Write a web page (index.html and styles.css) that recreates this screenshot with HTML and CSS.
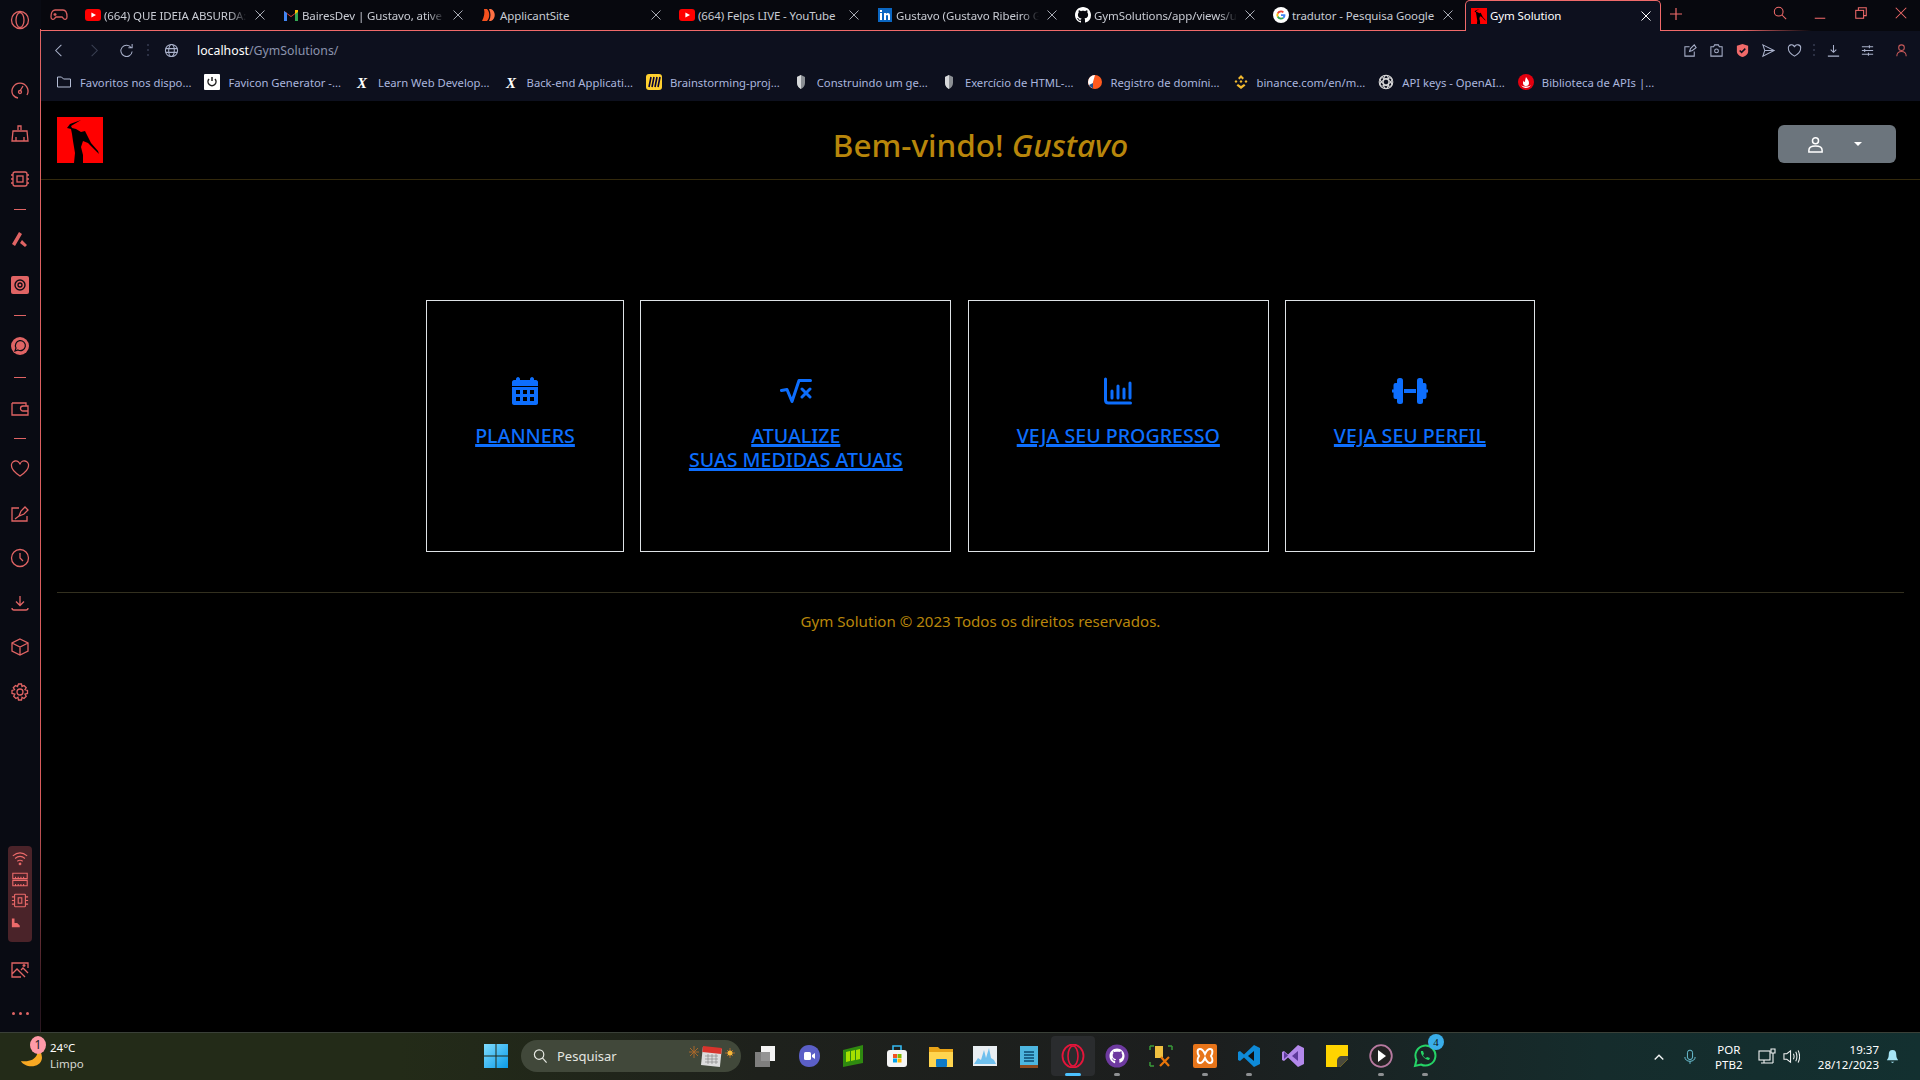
FILE: index.html
```html
<!DOCTYPE html>
<html lang="pt-BR">
<head>
  <meta charset="utf-8">
  <title>Gym Solution</title>
  <link rel="stylesheet" href="styles.css">
</head>
<body>

  <!-- shared favicons -->
  <svg class="defs" width="0" height="0">
    <symbol id="yt" viewBox="0 0 16 16"><rect y="2" width="16" height="12" rx="3" fill="#f00"/><path d="M6.4 5.4v5.2L11 8z" fill="#fff"/></symbol>
    <symbol id="logo" viewBox="0 0 46 46"><rect width="46" height="46" fill="#f00"/><path d="M24 3 13 7l-3 4 4 1 1 5 1 7 1 6 1 6-1 10h9v-8l-2-8 2-6 5 2 9 9 2 2-1-3-7-8-4-8-2-4-4 1-5-3-4-1-1-2z"/></symbol>
    <symbol id="shield" viewBox="0 0 16 16"><path d="M8 1 12 3v6c0 3-2 5-4 6-2-1-4-3-4-6V3z" fill="#8b8f94"/><path d="M8 1v14c-2-1-4-3-4-6V3z" fill="#d6d8da"/></symbol>
    <symbol id="x" viewBox="0 0 16 16"><text x="8" y="14" text-anchor="middle" class="x-mark">X</text></symbol>
  </svg>

  <div class="desktop">
    <div class="app">

      <aside class="sidebar">
        <div class="side-top">
          <svg class="side-ico" viewBox="0 0 20 20"><circle cx="10" cy="10" r="8.5"/><ellipse cx="10" cy="10" rx="4" ry="7.5"/></svg>
        </div>
        <div class="side-slot"><svg class="side-ico" viewBox="0 0 20 20"><path d="M3 15a8 8 0 1 1 14 0"/><path d="M3 15a8 8 0 0 0 5 3M10 11l3-5"/><circle cx="10" cy="12" r="1.5"/></svg></div>
        <div class="side-slot"><svg class="side-ico" viewBox="0 0 20 20"><path d="M8 6V2h3v4M3 7h14l1 10H2zM6 13v4M14 13v4"/></svg></div>
        <div class="side-slot"><svg class="side-ico" viewBox="0 0 20 20"><rect x="3" y="3" width="14" height="14" rx="2"/><rect x="7" y="7" width="6" height="6"/><path d="M1 6h2M1 10h2M1 14h2M17 6h2M17 10h2M17 14h2"/></svg></div>
        <div class="side-sep"></div>
        <div class="side-slot"><svg class="side-ico solid" viewBox="0 0 20 20"><path d="M9 2l3 2-7 12-3-2zM12 10l5 5-2 2-5-4z"/></svg></div>
        <div class="side-slot"><svg class="side-ico solid" viewBox="0 0 20 20"><rect x="1" y="1" width="18" height="18" rx="2"/><circle cx="10" cy="10" r="5" fill="none" stroke="#0a0c14" stroke-width="1.4"/><circle cx="10" cy="10" r="2" fill="none" stroke="#0a0c14"/></svg></div>
        <div class="side-sep"></div>
        <div class="side-slot"><svg class="side-ico solid" viewBox="0 0 20 20"><circle cx="10" cy="10" r="9"/><path d="M5 15l1-3a5 5 0 1 1 2 2z" fill="none" stroke="#0a0c14" stroke-width="1.2"/></svg></div>
        <div class="side-sep"></div>
        <div class="side-slot"><svg class="side-ico" viewBox="0 0 20 20"><path d="M2 5h14v3M2 5v12h16V8h-5a2 2 0 0 0 0 5h5"/></svg></div>
        <div class="side-sep"></div>
        <div class="side-slot"><svg class="side-ico" viewBox="0 0 20 20"><path d="M10 17C4 13 1.500 10 1.500 7A4.200 4.200 0 0 1 10 5.500 4.200 4.200 0 0 1 18.500 7c0 3-2.500 6-8.500 10z"/></svg></div>
        <div class="side-slot"><svg class="side-ico" viewBox="0 0 20 20"><path d="M9 4H2v13h15v-5M9 12l2-5 4-4 3 3-4 4-5 2zM5 15l4-3"/></svg></div>
        <div class="side-slot"><svg class="side-ico" viewBox="0 0 20 20"><circle cx="10" cy="10" r="8.500"/><path d="M10 5v5l3 3"/></svg></div>
        <div class="side-slot"><svg class="side-ico" viewBox="0 0 20 20"><path d="M10 3v9M6 8.500l4 4 4-4M2 15c0 1.500 1 2 2 2h12c1 0 2-.5 2-2"/></svg></div>
        <div class="side-slot"><svg class="side-ico" viewBox="0 0 20 20"><path d="M10 2l8 4v8l-8 4-8-4V6zM2 6l8 4 8-4M10 10v8"/></svg></div>
        <div class="side-slot"><svg class="side-ico" viewBox="0 0 20 20"><circle cx="10" cy="10" r="3"/><path d="M8.500 2h3l.5 2.500 2-1 2.200 2.200-1.200 2 2.500.8v3l-2.500.6 1.200 2.200-2.200 2.200-2-1.200-.5 2.700h-3l-.6-2.700-2 1.200-2.200-2.200 1.200-2.200L2 11.500v-3l2.500-.8-1.200-2 2.200-2.200 2 1z"/></svg></div>

        <div class="side-bottom">
          <div class="side-panel">
            <svg class="panel-ico" viewBox="0 0 20 16"><path d="M2 5c5-4 11-4 16 0M4.500 8c3.500-3 7.500-3 11 0M7 11c2-1.500 4-1.500 6 0M10 13l1 1-1 1-1-1z"/></svg>
            <svg class="panel-ico" viewBox="0 0 20 16"><path d="M2 1h16v6H2zM2 9h16v6H2zM5 5v2M8 5v2M11 5v2M14 5v2M5 13v2M8 13v2M11 13v2M14 13v2"/></svg>
            <svg class="panel-ico" viewBox="0 0 20 16"><rect x="4" y="1" width="12" height="14" rx="1"/><rect x="8" y="5" width="4" height="6"/><path d="M1 4h3M1 8h3M1 12h3M16 4h3M16 8h3M16 12h3"/></svg>
            <svg class="panel-graph" viewBox="0 0 20 16"><path d="M3 4h3v5h3l3 3v2H3z"/></svg>
          </div>
          <div class="side-slot"><svg class="side-ico" viewBox="0 0 20 20"><path d="M18 8V3H2v14h9M2 14l5-5 8 8M11 10l2-2 5 5M14 4v3M12.500 5.500h3"/></svg></div>
          <div class="side-more"><i></i><i></i><i></i></div>
        </div>
      </aside>

      <div class="browser">
        <div class="tabstrip">
          <svg class="game-ico" viewBox="0 0 20 20"><path d="M6 5h8c3 0 4 4 4 7 0 3-3 3-4 1l-1-1H7l-1 1c-1 2-4 2-4-1 0-3 1-7 4-7zM6 8v3M4.500 9.500h3M13 9h.1M15 10h.1"/></svg>

          <div class="tab"><svg class="fav"><use href="#yt"/></svg><span class="tab-title fade">(664) QUE IDEIA ABSURDA:</span><svg class="tab-x" viewBox="0 0 10 10"><path d="M.5.5l9 9M9.500.5l-9 9"/></svg></div>
          <div class="tab">
            <svg class="fav" viewBox="0 0 16 16"><path d="M1 14V4l7 5 7-5v10h-3V7L8 10 4 7v7z" fill="#ea4335"/><path d="M1 14V4l3 2v8z" fill="#4285f4"/><path d="M15 14V4l-3 2v8z" fill="#34a853"/><path d="M12 3h3v2l-3 2z" fill="#fbbc05"/></svg>
            <span class="tab-title fade">BairesDev | Gustavo, ative s</span><svg class="tab-x" viewBox="0 0 10 10"><path d="M.5.5l9 9M9.500.5l-9 9"/></svg>
          </div>
          <div class="tab">
            <svg class="fav" viewBox="0 0 16 16"><path d="M3 2h3c3 3 3 9 0 12H1c2-4 3-8 2-12z" fill="#f4511e"/><path d="M8 2h2c5 2 5 10 0 12H8c2-4 2-8 0-12z" fill="#ff7043"/></svg>
            <span class="tab-title">ApplicantSite</span><svg class="tab-x" viewBox="0 0 10 10"><path d="M.5.5l9 9M9.500.5l-9 9"/></svg>
          </div>
          <div class="tab"><svg class="fav"><use href="#yt"/></svg><span class="tab-title">(664) Felps LIVE - YouTube</span><svg class="tab-x" viewBox="0 0 10 10"><path d="M.5.5l9 9M9.500.5l-9 9"/></svg></div>
          <div class="tab">
            <svg class="fav" viewBox="0 0 16 16"><rect x="1" y="1" width="14" height="14" fill="#0a66c2"/><path d="M3 6h2v7H3zM3 3h2v2H3zM7 6h2v1c1-1.500 4-1.500 4 1.500V13h-2V9c0-1.500-2-1.500-2 0v4H7z" fill="#fff"/></svg>
            <span class="tab-title fade">Gustavo (Gustavo Ribeiro G</span><svg class="tab-x" viewBox="0 0 10 10"><path d="M.5.5l9 9M9.500.5l-9 9"/></svg>
          </div>
          <div class="tab">
            <svg class="fav" viewBox="0 0 16 16"><path fill="#fff" d="M8 0C3.580 0 0 3.580 0 8c0 3.540 2.290 6.530 5.470 7.590.4.070.55-.17.55-.38 0-.19-.01-.82-.01-1.490-2.010.37-2.530-.49-2.690-.94-.09-.23-.48-.94-.82-1.130-.28-.15-.68-.52-.01-.53.63-.01 1.080.58 1.230.82.72 1.210 1.870.87 2.330.66.070-.52.28-.87.51-1.070-1.780-.2-3.640-.89-3.640-3.950 0-.87.31-1.590.82-2.150-.08-.2-.36-1.020.08-2.120 0 0 .67-.21 2.200.82.64-.18 1.320-.27 2-.27.68 0 1.360.09 2 .27 1.530-1.040 2.200-.82 2.200-.82.44 1.100.16 1.920.08 2.120.51.56.82 1.270.82 2.150 0 3.070-1.870 3.750-3.650 3.950.29.25.54.73.54 1.480 0 1.070-.01 1.930-.01 2.200 0 .21.15.46.55.38A8.013 8.013 0 0 0 16 8c0-4.420-3.580-8-8-8z"/></svg>
            <span class="tab-title fade">GymSolutions/app/views/u</span><svg class="tab-x" viewBox="0 0 10 10"><path d="M.5.5l9 9M9.500.5l-9 9"/></svg>
          </div>
          <div class="tab">
            <svg class="fav" viewBox="0 0 16 16"><circle cx="8" cy="8" r="8" fill="#fff"/><path d="M8 3.500a4.500 4.500 0 0 1 3 1.200l-1.300 1.300A2.700 2.700 0 0 0 5.500 7L4 5.800A4.500 4.500 0 0 1 8 3.500z" fill="#ea4335"/><path d="M4 5.800 5.500 7a2.700 2.700 0 0 0 0 2L4 10.200a4.500 4.500 0 0 1 0-4.400z" fill="#fbbc05"/><path d="M4 10.200 5.500 9a2.700 2.700 0 0 0 4 1.300l1.400 1.100A4.500 4.500 0 0 1 4 10.200z" fill="#34a853"/><path d="M12.400 8c0 1.400-.5 2.600-1.500 3.400l-1.400-1.100c.4-.3.7-.7.8-1.300H8V7.200h4.300z" fill="#4285f4"/></svg>
            <span class="tab-title">tradutor - Pesquisa Google</span><svg class="tab-x" viewBox="0 0 10 10"><path d="M.5.5l9 9M9.500.5l-9 9"/></svg>
          </div>
          <div class="tab active"><svg class="fav"><use href="#logo"/></svg><span class="tab-title">Gym Solution</span><svg class="tab-x" viewBox="0 0 10 10"><path d="M.5.5l9 9M9.500.5l-9 9"/></svg></div>

          <svg class="tab-plus" viewBox="0 0 12 12"><path d="M6 0v12M0 6h12"/></svg>

          <div class="win-ctrls">
            <svg class="win-ico" viewBox="0 0 16 16"><circle cx="6.500" cy="6.500" r="5"/><path d="M10 10l5 5"/></svg>
            <svg class="win-ico" viewBox="0 0 16 16"><path d="M2 14h12"/></svg>
            <svg class="win-ico" viewBox="0 0 16 16"><rect x="2" y="5" width="9" height="9"/><path d="M5 5V2h9v9h-3"/></svg>
            <svg class="win-ico" viewBox="0 0 16 16"><path d="M2 2l12 12M14 2 2 14"/></svg>
          </div>
        </div>

        <div class="toolbar">
          <div class="nav-btns">
            <svg class="tool-ico" viewBox="0 0 16 16"><path d="M10 2 4 8l6 6"/></svg>
            <svg class="tool-ico off" viewBox="0 0 16 16"><path d="M6 2l6 6-6 6"/></svg>
            <svg class="tool-ico" viewBox="0 0 16 16"><path d="M13 5a6 6 0 1 0 1 4M14 1v4h-4"/></svg>
          </div>
          <span class="tool-dots left"></span>
          <svg class="tool-ico" viewBox="0 0 16 16"><circle cx="8" cy="8" r="6.500"/><ellipse cx="8" cy="8" rx="3" ry="6.500"/><path d="M2 6h12M2 10h12"/></svg>
          <span class="url"><b>localhost</b>/GymSolutions/</span>
          <div class="tool-right">
            <svg class="tool-ico" viewBox="0 0 16 16"><path d="M7 4H2v10h10V9M7 9l1-3 4-4 2 3-4 3z"/></svg>
            <svg class="tool-ico" viewBox="0 0 16 16"><path d="M2 4h3l1-2h4l1 2h3v10H2z"/><circle cx="8" cy="8.500" r="2"/></svg>
            <svg class="tool-ico badge" viewBox="0 0 16 16"><path d="M8 1l6 2v6c0 3-3 5-6 6-3-1-6-3-6-6V3z"/><path class="tick" d="M5 8l2 2 4-4"/></svg>
            <svg class="tool-ico" viewBox="0 0 16 16"><path d="M2 2l12 6-12 6 2-6zM4 8h10"/></svg>
            <svg class="tool-ico" viewBox="0 0 16 16"><path d="M8 14C3 11 1.500 8 1.500 6A3.300 3.300 0 0 1 8 4.500 3.300 3.300 0 0 1 14.500 6c0 2-1.500 5-6.500 8z"/></svg>
            <span class="tool-dots"></span>
            <svg class="tool-ico" viewBox="0 0 16 16"><path d="M8 2v8M5 7l3 3 3-3M2 14h12"/></svg>
            <svg class="tool-ico" viewBox="0 0 16 16"><path d="M2 4h12M2 8h12M2 12h12M10 2.500v3M5 6.500v3M9 10.500v3"/></svg>
            <svg class="tool-ico user" viewBox="0 0 16 16"><circle cx="8" cy="5" r="3"/><path d="M3 14c0-3 2-5 5-5s5 2 5 5"/></svg>
          </div>
        </div>

        <div class="bookmarks">
          <div class="bm"><svg class="bm-ico folder" viewBox="0 0 16 16"><path d="M1.500 3h4l2 2h7v8h-13z"/></svg><span>Favoritos nos dispo...</span></div>
          <div class="bm"><svg class="bm-ico" viewBox="0 0 16 16"><rect width="16" height="16" rx="1" fill="#fff"/><path d="M5 5a4 4 0 1 0 6 0M8 3v4" fill="none" stroke="#222" stroke-width="1.500"/></svg><span>Favicon Generator -...</span></div>
          <div class="bm"><svg class="bm-ico"><use href="#x"/></svg><span>Learn Web Develop...</span></div>
          <div class="bm"><svg class="bm-ico"><use href="#x"/></svg><span>Back-end Applicati...</span></div>
          <div class="bm"><svg class="bm-ico" viewBox="0 0 16 16"><rect width="16" height="16" rx="3" fill="#ffd02f"/><path d="M5 3 3 13M8 3 6 13M11 3 9 13M14 3l-2 10" stroke="#050038" stroke-width="1.600"/></svg><span>Brainstorming-proj...</span></div>
          <div class="bm"><svg class="bm-ico"><use href="#shield"/></svg><span>Construindo um ge...</span></div>
          <div class="bm"><svg class="bm-ico"><use href="#shield"/></svg><span>Exercício de HTML-...</span></div>
          <div class="bm"><svg class="bm-ico" viewBox="0 0 16 16"><circle cx="8" cy="8" r="7" fill="#ff5a1f"/><path d="M8 1a7 7 0 0 0-7 7c0 3 2 5 4 6l1-6z" fill="#fff"/><path d="M2 11c1 2 3 3 4 3l0-5z" fill="#1c4f8c"/></svg><span>Registro de domíni...</span></div>
          <div class="bm"><svg class="bm-ico" viewBox="0 0 16 16"><path d="M8 1l3 3-1.500 1.500L8 4 6.500 5.500 5 4zM3 6l1.500 1.500L3 9 1.500 7.500zM13 6l1.500 1.500L13 9l-1.500-1.500zM8 6l1.500 1.500L8 9 6.500 7.500zM5 10l3 2 3-2 1.500 1.500L8 15l-4.500-3.500z" fill="#f3ba2f"/></svg><span>binance.com/en/m...</span></div>
          <div class="bm"><svg class="bm-ico" viewBox="0 0 16 16"><g fill="none" stroke="#d8d8d8" stroke-width="1.100"><circle cx="8" cy="8" r="6.800"/><ellipse cx="8" cy="8" rx="6.500" ry="2.800" transform="rotate(30 8 8)"/><ellipse cx="8" cy="8" rx="6.500" ry="2.800" transform="rotate(-30 8 8)"/><ellipse cx="8" cy="8" rx="2.800" ry="6.500"/></g></svg><span>API keys - OpenAI...</span></div>
          <div class="bm"><svg class="bm-ico" viewBox="0 0 16 16"><circle cx="8" cy="8" r="8" fill="#e3000f"/><path d="M8 3c1 2 3 3 3 6a3 3 0 0 1-6 0c0-1 .5-2 1-2.500 0 1 .5 1.500 1 1.500 0-2 .5-3 1-5zM3 11c1 2 3 3 5 3s4-1 5-3c-1 1-3 1.500-5 1.500S4 12 3 11z" fill="#fff"/></svg><span>Biblioteca de APIs |...</span></div>
        </div>

        <main class="page">
          <header class="page-head">
            <div class="brand"><svg class="brand-logo"><use href="#logo"/></svg></div>
            <h1 class="welcome">Bem-vindo! <em>Gustavo</em></h1>
            <div class="user-menu">
              <button class="user-btn">
                <svg class="user-ico" viewBox="0 0 18 18"><circle cx="9" cy="5" r="3.200" fill="none" stroke="#fff" stroke-width="1.600"/><path d="M2 17v-2c0-3 3-4.500 7-4.500s7 1.500 7 4.500v2z" fill="none" stroke="#fff" stroke-width="1.600"/></svg>
                <span class="caret"></span>
              </button>
            </div>
          </header>

          <section class="cards">
            <a class="card" href="#">
              <svg class="card-ico" width="26" height="28" viewBox="0 0 26 28"><path d="M6 0c1 0 2 1 2 2v1h10V2c0-1 1-2 2-2s2 1 2 2v1h2c1 0 2 1 2 2v4H0V5c0-1 1-2 2-2h2V2c0-1 1-2 2-2z"/><path fill-rule="evenodd" d="M0 10h26v16c0 1-1 2-2 2H2c-1 0-2-1-2-2zM4 13v4h4v-4zM11 13v4h4v-4zM18 13v4h4v-4zM4 20v4h4v-4zM11 20v4h4v-4zM18 20v4h4v-4z"/></svg>
              <span class="card-text">PLANNERS</span>
            </a>
            <a class="card" href="#">
              <svg class="card-ico" width="32" height="28" viewBox="0 0 32 28"><path class="line" d="M1.500 13.500 7 12.500l5 12 7-21h11.500"/><path class="line" d="M22 12l8 8M30 12l-8 8"/></svg>
              <span class="card-text">ATUALIZE<br>SUAS MEDIDAS ATUAIS</span>
            </a>
            <a class="card" href="#">
              <svg class="card-ico" width="28" height="28" viewBox="0 0 28 28"><path class="line" d="M1.500 2v21c0 2 1 3 3 3h22"/><path class="line" d="M8 14v7M14 9v12M20 12v9M26 6v15" /></svg>
              <span class="card-text">VEJA SEU PROGRESSO</span>
            </a>
            <a class="card" href="#">
              <svg class="card-ico" width="36" height="28" viewBox="0 0 36 28"><rect x="5" y="1" width="6" height="26" rx="2.500"/><rect x="25" y="1" width="6" height="26" rx="2.500"/><rect x="1.500" y="6" width="5" height="16" rx="2"/><rect x="29.500" y="6" width="5" height="16" rx="2"/><rect x="0" y="12.500" width="2" height="3"/><rect x="34" y="12.500" width="2" height="3"/><rect x="12" y="12" width="12" height="4"/></svg>
              <span class="card-text">VEJA SEU PERFIL</span>
            </a>
          </section>

          <footer class="page-foot">Gym Solution © 2023 Todos os direitos reservados.</footer>
        </main>
      </div>
    </div>

    <div class="taskbar">
      <div class="weather">
        <svg class="moon" viewBox="0 0 24 24"><path d="M16 1c4 6 1 17-15 15 3 7 20 8 21-3 0-5-3-10-6-12z" fill="#f7a823"/></svg>
        <span class="weather-badge">1</span>
        <div class="weather-text"><span>24°C</span><span>Limpo</span></div>
      </div>

      <div class="task-center">
        <svg class="win-logo" viewBox="0 0 24 24"><defs><linearGradient id="wg" x1="0" y1="0" x2="1" y2="1"><stop offset="0" stop-color="#7fdcff"/><stop offset="1" stop-color="#0a9be8"/></linearGradient></defs><path d="M0 0h11.500v11.500H0zM12.500 0H24v11.500H12.500zM0 12.500h11.500V24H0zM12.500 12.500H24V24H12.500z" fill="url(#wg)"/></svg>
        <div class="search">
          <svg class="search-ico" viewBox="0 0 16 16"><circle cx="6.500" cy="6.500" r="5"/><path d="M10 10l4.500 5"/></svg>
          <span>Pesquisar</span>
          <svg class="doodle" viewBox="0 0 46 24"><path d="M5 2v12M0 8h10M1 4l8 8M9 4l-8 8" stroke="#a8672a"/><rect x="13" y="4" width="19" height="18" fill="#ddd" transform="rotate(6 22 12)"/><rect x="13" y="3" width="19" height="6" fill="#d8342c" transform="rotate(6 22 12)"/><path d="M16 12h13M16 15h13M16 18h13M19 10v10M23 10v10M27 10v10" stroke="#888" stroke-width=".7"/><path d="M41 4v10M36 9h10M38 6l6 6M44 6l-6 6" stroke="#a8672a"/><circle cx="41" cy="9" r="2.500" fill="#f5b73a"/></svg>
        </div>
        <div class="task-apps">
          <div class="app-slot"><svg class="app-ico" viewBox="0 0 24 24"><rect x="8" y="2" width="14" height="15" fill="#f4f4f4"/><rect x="2" y="8" width="15" height="15" fill="#8a8a8a" opacity=".9"/></svg></div>
          <div class="app-slot"><svg class="app-ico" viewBox="0 0 24 24"><path d="M12 1c7 0 11 5 11 11s-4 11-11 11c-6 0-10-4-10-11S6 1 12 1z" fill="#5b5fc7"/><rect x="7" y="8" width="7" height="8" rx="1.500" fill="#fff"/><path d="M15 11l3-2v6l-3-2z" fill="#fff"/></svg></div>
          <div class="app-slot"><svg class="app-ico" viewBox="0 0 24 24"><path d="M2 6l20-5v18L2 23z" fill="#2f8a10"/><path d="M5 8l4-1v10l-4 1zM10 7l4-1v10l-4 1zM15 6l4-1v10l-4 1z" fill="#a4e000"/></svg></div>
          <div class="app-slot"><svg class="app-ico" viewBox="0 0 24 24"><path d="M8 6V2h8v4" fill="none" stroke="#35b8f0" stroke-width="1.600"/><rect x="2" y="6" width="20" height="17" rx="3" fill="#f5f5f5"/><path d="M8 10h4v4H8z" fill="#f25022"/><path d="M12.500 10h4v4h-4z" fill="#7fba00"/><path d="M8 14.500h4v4H8z" fill="#00a4ef"/><path d="M12.500 14.500h4v4h-4z" fill="#ffb900"/></svg></div>
          <div class="app-slot"><svg class="app-ico" viewBox="0 0 24 24"><path d="M0 3h9l2 2h13v18H0z" fill="#e8a317"/><path d="M0 8h24v15H0z" fill="#ffd54f"/><rect x="7" y="15" width="11" height="8" rx="1" fill="#0f7ac6"/></svg></div>
          <div class="app-slot"><svg class="app-ico" viewBox="0 0 24 24"><rect y="2" width="24" height="20" fill="#e9eef2"/><path d="M1 20l4-6 3 2 3-10 2 8 3-10 2 10 3 2 2 4z" fill="#6fc0ee"/></svg></div>
          <div class="app-slot"><svg class="app-ico" viewBox="0 0 24 24"><rect x="3" y="2" width="18" height="22" fill="#4db6e0"/><rect x="3" y="21" width="18" height="3" fill="#8d4a1f"/><path d="M7 8h10M7 11h10M7 14h10M7 17h10" stroke="#0b4a70" stroke-width="1.300"/></svg></div>
          <div class="app-slot current"><svg class="app-ico" viewBox="0 0 24 24"><ellipse cx="12" cy="12" rx="10.500" ry="11.500" fill="none" stroke="#e5153b" stroke-width="1.800"/><ellipse cx="12" cy="12" rx="5" ry="10" fill="none" stroke="#e5153b" stroke-width="1.600"/></svg><i class="running wide"></i></div>
          <div class="app-slot"><svg class="app-ico" viewBox="0 0 24 24"><circle cx="12" cy="12" r="11.500" fill="#6e3aa0"/><path transform="translate(4.500 4.500) scale(.94)" fill="#fff" d="M8 0C3.580 0 0 3.580 0 8c0 3.540 2.290 6.530 5.470 7.590.4.070.55-.17.55-.38l0-2.200c-2 .4-2.500-.9-2.700-1.400-.5-.9-1.200-1.300-.8-1.300 1 0 1.500 1 1.700 1.300.7 1 1.900.8 2.300.6.100-.5.300-.9.500-1.100-1.800-.2-3.600-.9-3.600-4 0-.9.300-1.600.8-2.100-.1-.2-.4-1 .1-2.100 0 0 .7-.2 2.200.8 1.300-.4 2.700-.4 4 0 1.500-1 2.200-.8 2.200-.8.500 1.100.2 1.900.1 2.100.5.500.8 1.300.8 2.100 0 3.100-1.900 3.800-3.600 4 .3.200.5.700.5 1.500v2.200c0 .2.200.5.600.4A8 8 0 0 0 16 8c0-4.400-3.600-8-8-8z"/></svg><i class="running"></i></div>
          <div class="app-slot"><svg class="app-ico" viewBox="0 0 24 24"><path d="M6 2h8v12H6z" fill="#f0c040"/><path d="M1 2h4M1 2v4M23 2h-4M23 2v4M1 22h4M1 22v-4" stroke="#3a9a3a" stroke-width="1.500"/><path d="M11 22l9-9M12 13l8 9" stroke="#e8750a" stroke-width="2.200"/></svg></div>
          <div class="app-slot"><svg class="app-ico" viewBox="0 0 24 24"><rect width="24" height="24" rx="2" fill="#e8751a"/><path d="M7 5c3 0 4 3 5 5 1-2 2-5 5-5 3 0 3 4 1 7 2 3 2 7-1 7-3 0-4-3-5-5-1 2-2 5-5 5-3 0-3-4-1-7-2-3-2-7 1-7z" fill="none" stroke="#fff" stroke-width="2"/></svg><i class="running"></i></div>
          <div class="app-slot"><svg class="app-ico" viewBox="0 0 24 24"><path d="M17 1l6 3v16l-6 3L7 13.500 3 17l-2-1V8l2-1 4 3.500z" fill="#0e8ad8"/><path d="M17 7l-6 5 6 5z" fill="#111"/></svg><i class="running"></i></div>
          <div class="app-slot"><svg class="app-ico" viewBox="0 0 24 24"><path d="M17 1l6 3v16l-6 3L7 13.500 3 17l-2-1V8l2-1 4 3.500z" fill="#b388eb"/><path d="M3 8l4 3.500L3 15z" fill="#5e3a9c"/><path d="M17 7l-6 5 6 5z" fill="#5e3a9c"/></svg></div>
          <div class="app-slot"><svg class="app-ico" viewBox="0 0 24 24"><path d="M1 1h22v14l-8 8H1z" fill="#ffd400"/><path d="M23 12v3l-8 8h-3v-6c0-3 2-5 5-5z" fill="#4a4a3c"/></svg></div>
          <div class="app-slot"><svg class="app-ico" viewBox="0 0 24 24"><circle cx="12" cy="12" r="10.800" fill="#222" stroke="#b77aa0" stroke-width="1.800"/><path d="M9 6l8 6-8 6z" fill="#fff"/></svg><i class="running"></i></div>
          <div class="app-slot"><svg class="app-ico" viewBox="0 0 24 24"><path d="M2 22l1.500-6A10 10 0 1 1 8 20.500z" fill="none" stroke="#25d366" stroke-width="2"/><path d="M8 7c-1 3 4 9 8 9l1-2-3-1-1 1c-1 0-3-2-3-3l1-1-1-3z" fill="#25d366"/></svg><span class="app-badge">4</span><i class="running"></i></div>
        </div>
      </div>

      <div class="tray">
        <svg class="tray-ico chev" viewBox="0 0 14 14"><path d="M2 10l5-5 5 5"/></svg>
        <svg class="tray-ico mic" viewBox="0 0 14 18"><rect x="4" y="1" width="6" height="11" rx="3"/><path d="M1 9c0 3 2.500 5 6 5s6-2 6-5M7 14v3"/></svg>
        <div class="tray-lang"><span>POR</span><span>PTB2</span></div>
        <svg class="tray-ico net" viewBox="0 0 18 18"><rect x="1" y="3" width="11" height="9"/><path d="M6 12v3M3 15h12M15 5v10M13 1h4v4h-4z"/></svg>
        <svg class="tray-ico vol" viewBox="0 0 18 18"><path d="M1 6h3l4-3v12l-4-3H1zM11 6c1 2 1 4 0 6M13.500 4c1.500 3 1.500 7 0 10M16 2.500c2 4 2 9 0 13"/></svg>
        <div class="tray-clock"><span>19:37</span><span>28/12/2023</span></div>
        <svg class="bell" viewBox="0 0 16 16"><path d="M8 1c3 0 4 2 4 5s1 4 2 6H2c1-2 2-3 2-6s1-5 4-5zM6 13.500h4L8 15z"/></svg>
      </div>
    </div>
  </div>

</body>
</html>
```

FILE: styles.css
```css
* { box-sizing: border-box; }
html, body { margin: 0; height: 100%; background: #000; overflow: hidden; }
body { font-family: "Noto Sans", "Open Sans", sans-serif; }
.defs { position: absolute; }
.x-mark { font: italic bold 15px "Liberation Serif", serif; fill: #fff; }

.desktop { display: flex; flex-direction: column; height: 1080px; }
.app { display: flex; flex: 1; min-height: 0; }

/* left rail */
.sidebar { display: flex; flex-direction: column; align-items: center; width: 41px; flex: none; background: #090b13; border-right: 1px solid; border-image: linear-gradient(to bottom, transparent 30px, #e06464 30px, #d85c5c 800px, #2b1720 1000px) 1; }
.side-top { height: 67.5px; padding-top: 10px; flex: none; }
.side-slot { display: flex; align-items: center; justify-content: center; height: 44.5px; flex: none; }
.side-ico { width: 20px; height: 20px; fill: none; stroke: #e06464; stroke-width: 1.3; }
.side-ico.solid { fill: #e06464; stroke: none; }
.side-sep { width: 12px; height: 1px; margin: 8px 0; background: #e06464; flex: none; }
.side-bottom { display: flex; flex-direction: column; align-items: center; margin-top: auto; }
.side-panel { display: flex; flex-direction: column; align-items: center; gap: 6px; width: 24px; height: 96px; margin-bottom: 6px; padding-top: 5px; border-radius: 4px; background: #4a2329; }
.panel-ico { width: 18px; height: 15px; fill: none; stroke: #ec6a6a; stroke-width: 1.2; }
.panel-graph { width: 18px; height: 14px; margin-top: 1px; fill: #ec6a6a; margin-right: 4px; }
.side-more { display: flex; gap: 4px; height: 40px; padding-top: 20px; }
.side-more i { width: 3px; height: 3px; border-radius: 50%; background: #e06464; }

/* browser chrome */
.browser { display: flex; flex-direction: column; flex: 1; min-width: 0; }
.tabstrip { display: flex; height: 31px; flex: none; padding-left: 8px; gap: 2px; background: #07080e; border-bottom: 1px solid; border-image: linear-gradient(to right, #f06a6a 1650px, #f06a6a 1700px, transparent 1770px) 1; }
.game-ico { width: 20px; height: 20px; margin: 5px 8px 0 0; fill: none; stroke: #d65f5f; stroke-width: 1.3; flex: none; }
.tab { display: flex; align-items: center; width: 196px; height: 30px; flex: none; padding: 0 8px 0 6px; font-size: 11.5px; letter-spacing: -.1px; color: #c8cbd3; }
.tab.active { height: 31px; margin-bottom: -1px; padding-left: 5px; padding-right: 7px; padding-bottom: 1px; color: #fff; background: #0d101e; border: 1px solid #f06a6a; border-bottom: 0; border-radius: 5px 5px 0 0; }
.fav { width: 16px; height: 16px; margin-right: 3px; flex: none; }
.tab-title { flex: 1; min-width: 0; white-space: nowrap; }
.tab-title.fade { overflow: hidden; mask-image: linear-gradient(to right, #000 88%, transparent 100%); }
.tab-x { width: 10px; height: 10px; margin: 0 2px 0 8px; fill: none; stroke: #a8abb4; stroke-width: 1; flex: none; }
.tab.active .tab-x { stroke: #fff; }
.tab-plus { width: 12px; height: 12px; margin: 8px 0 0 7px; fill: none; stroke: #f06a6a; stroke-width: 1.2; flex: none; }
.win-ctrls { display: flex; justify-content: space-between; align-items: center; margin-left: auto; width: 147px; padding: 0 12px 5px 0; }
.win-ico { width: 14px; height: 14px; fill: none; stroke: #f06a6a; stroke-width: 1.2; }

.toolbar { display: flex; align-items: center; height: 38px; flex: none; padding-left: 11px; background: #0d101e; }
.nav-btns { display: flex; gap: 18.5px; }
.tool-ico { width: 15px; height: 15px; fill: none; stroke: #aab2cc; stroke-width: 1.1; flex: none; }
.tool-ico.off { stroke: #3b4054; }
.tool-ico.badge { fill: #f06a6a; stroke: none; }
.tool-ico .tick { fill: none; stroke: #0d101e; stroke-width: 1.6; }
.tool-ico.user { stroke: #c95a5a; }
.tool-dots { width: 2px; height: 12px; background: repeating-linear-gradient(to bottom, #2b3044 0 2px, transparent 2px 5px); flex: none; }
.tool-dots.left { margin: 0 15px 0 13px; }
.url { margin-left: 18px; font-size: 12.3px; color: #8b93ad; }
.url b { font-weight: 400; color: #fff; }
.tool-right { display: flex; align-items: center; gap: 11px; margin-left: auto; padding-right: 11px; }
.tool-right .tool-ico:nth-last-child(2) { margin: 0 8px 0 8px; }

.bookmarks { display: flex; align-items: center; gap: 13px; height: 32px; flex: none; padding: 0 0 6px 15px; font-size: 11.25px; color: #aab6de; background: #0d101e; }
.bm { display: flex; align-items: center; gap: 8px; white-space: nowrap; }
.bm-ico { width: 16px; height: 16px; flex: none; }
.bm-ico.folder { fill: none; stroke: #b4bcd4; stroke-width: 1; }

/* the page itself */
.page { flex: 1; background: #000; min-height: 0; }
.page-head { display: grid; grid-template-columns: 1fr auto 1fr; align-items: center; height: 79px; padding: 16px; border-bottom: 1px solid #33290c; }
.brand-logo { display: block; width: 46px; height: 46px; }
.welcome { margin: 9px 0 0; font-size: 31.5px; font-weight: 500; line-height: 1.2; color: #b8860b; }
.welcome em { font-style: italic; }
.user-menu { display: flex; justify-content: flex-end; padding: 8px 8px 0 0; }
.user-btn { display: flex; align-items: center; gap: 30px; width: 118px; height: 38px; padding: 0 0 0 29px; background: #6c757d; border: 0; border-radius: 6px; }
.user-ico { width: 17px; height: 17px; }
.caret { width: 0; height: 0; border: 4px solid transparent; border-top-color: #fff; border-bottom: 0; }

.cards { display: flex; justify-content: center; gap: 16.5px; margin-top: 120px; }
.card { display: flex; flex-direction: column; align-items: center; padding: 76px 47.75px 79px; border: 1px solid #dee2e6; color: #0d6efd; }
.card-ico { display: block; margin-bottom: 19px; fill: #0d6efd; }
.card-ico .line { fill: none; stroke: #0d6efd; stroke-width: 3; stroke-linecap: round; stroke-linejoin: round; }
.card-text { font-size: 19.6px; font-weight: 500; line-height: 24px; text-align: center; text-decoration: underline; text-decoration-thickness: 1.5px; text-underline-offset: 2px; }
.page-foot { margin: 40px 16px 0; padding-top: 16px; font-size: 15.1px; line-height: 24px; text-align: center; color: #b8860b; border-top: 1px solid #33301f; }

/* windows taskbar */
.taskbar { position: relative; display: flex; align-items: center; height: 48px; flex: none; padding-bottom: 1px; color: #fff; background: linear-gradient(to right, #232b18 0, #232b18 400px, #1e211c 760px, #1c1e1e 1200px, #152c2c 1600px, #133030 100%); border-top: 1px solid #3a4038; }
.weather { position: relative; display: flex; align-items: center; width: 476px; padding-left: 20px; flex: none; }
.moon { width: 24px; height: 24px; margin-top: 2px; }
.weather-badge { position: absolute; left: 30px; top: -4px; width: 16px; height: 18px; border-radius: 50%; font-size: 12px; line-height: 18px; text-align: center; color: #222; background: #ff9aa8; }
.weather-text { display: flex; flex-direction: column; margin-left: 6px; font-size: 11.500px; line-height: 16px; }
.weather-text span + span { color: #d6d8d2; }
.task-center { display: flex; align-items: center; }
.win-logo { width: 24px; height: 24px; margin: 0 13px 0 8px; }
.search { display: flex; align-items: center; width: 220px; height: 32px; padding-left: 12px; border-radius: 16px; font-size: 13px; color: #e4e6e0; background: #41483a; }
.search-ico { width: 15px; height: 16px; margin-right: 9px; fill: none; stroke: #e6e8e2; stroke-width: 1.3; }
.doodle { width: 46px; height: 24px; margin-left: auto; margin-right: 6px; fill: none; }
.task-apps { display: flex; margin-left: 2px; }
.app-slot { position: relative; display: flex; align-items: center; justify-content: center; width: 44px; height: 40px; }
.app-slot.current { background: #2a2c2e; border-radius: 4px; }
.app-ico { width: 24px; height: 24px; }
.running { position: absolute; left: 50%; bottom: 0; width: 6px; height: 3px; margin-left: -3px; border-radius: 2px; background: #8e9092; }
.running.wide { width: 16px; margin-left: -8px; background: #4cc2ff; }
.app-badge { position: absolute; top: -2px; right: 3px; width: 16px; height: 16px; border-radius: 50%; font: 11px/16px "Liberation Serif", serif; text-align: center; color: #111; background: #3aaeea; }
.tray { display: flex; align-items: center; position: absolute; right: 0; top: 0; height: 47px; font-size: 11.500px; line-height: 15px; }
.tray-ico { fill: none; stroke: #f2f4f4; stroke-width: 1.1; }
.chev { width: 12px; height: 12px; margin-right: 19px; stroke-width: 1.6; }
.mic { width: 12px; height: 18px; margin-right: 14px; stroke: #6fc8dc; }
.tray-lang { display: flex; flex-direction: column; align-items: center; width: 38px; margin-right: 10px; }
.net { width: 18px; height: 18px; margin-right: 7px; }
.vol { width: 17px; height: 17px; margin-right: 18px; }
.tray-clock { display: flex; flex-direction: column; align-items: flex-end; margin-right: 6px; }
.bell { width: 15px; height: 15px; margin-right: 20px; fill: #a6e4f4; }
```
